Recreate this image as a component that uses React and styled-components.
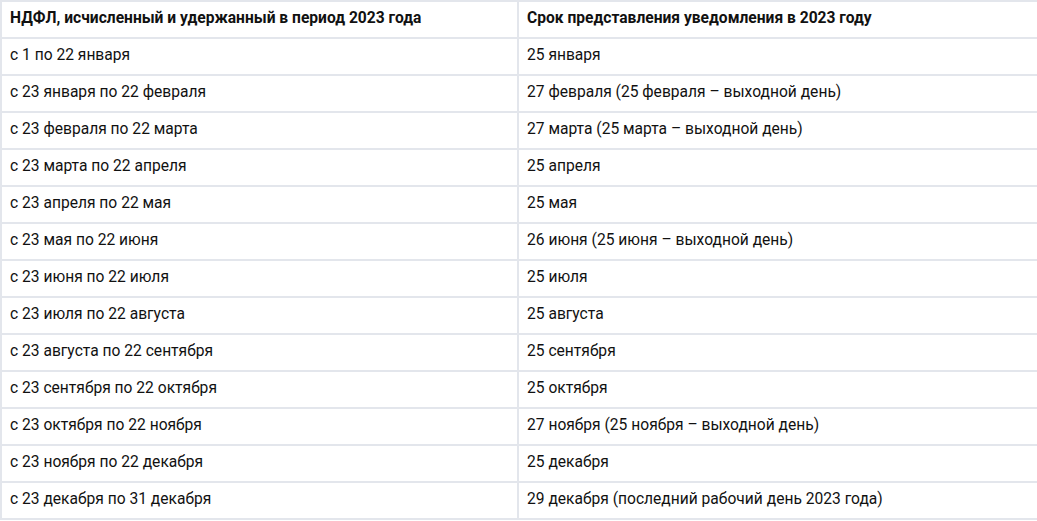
import styled, { createGlobalStyle } from "styled-components";

const GlobalStyle = createGlobalStyle`
  html, body {
    margin: 0;
    padding: 0;
    background: #fff;
  }
  body {
    font-family: Roboto, "Liberation Sans", sans-serif;
    color: #111;
    overflow: hidden;
  }
`;

const Table = styled.table`
  width: 1040px;
  border-collapse: separate;
  border-spacing: 0;
  border-top: 2px solid #e3e6ec;
  border-left: 2px solid #e3e6ec;
  table-layout: fixed;
  font-size: 15.6px;

  col.first {
    width: 517px;
  }
`;

const Cell = styled.td`
  padding: 7px 8px 9px;
  line-height: 19px;
  height: 19px;
  border-right: 2px solid #e3e6ec;
  border-bottom: 2px solid #e3e6ec;
  font-weight: ${(p) => (p.$head ? 700 : 400)};
  white-space: nowrap;
  vertical-align: middle;
`;

const rows = [
  ["с 1 по 22 января", "25 января"],
  ["с 23 января по 22 февраля", "27 февраля (25 февраля – выходной день)"],
  ["с 23 февраля по 22 марта", "27 марта (25 марта – выходной день)"],
  ["с 23 марта по 22 апреля", "25 апреля"],
  ["с 23 апреля по 22 мая", "25 мая"],
  ["с 23 мая по 22 июня", "26 июня (25 июня – выходной день)"],
  ["с 23 июня по 22 июля", "25 июля"],
  ["с 23 июля по 22 августа", "25 августа"],
  ["с 23 августа по 22 сентября", "25 сентября"],
  ["с 23 сентября по 22 октября", "25 октября"],
  ["с 23 октября по 22 ноября", "27 ноября (25 ноября – выходной день)"],
  ["с 23 ноября по 22 декабря", "25 декабря"],
  ["с 23 декабря по 31 декабря", "29 декабря (последний рабочий день 2023 года)"],
];

const App = () => {
  return (
    <>
      <GlobalStyle />
      <Table>
        <colgroup>
          <col className="first" />
          <col />
        </colgroup>
        <tbody>
          <tr>
            <Cell $head>НДФЛ, исчисленный и удержанный в период 2023 года</Cell>
            <Cell $head>Срок представления уведомления в 2023 году</Cell>
          </tr>
          {rows.map(([period, term]) => (
            <tr key={period}>
              <Cell>{period}</Cell>
              <Cell>{term}</Cell>
            </tr>
          ))}
        </tbody>
      </Table>
    </>
  );
};

export default App;
